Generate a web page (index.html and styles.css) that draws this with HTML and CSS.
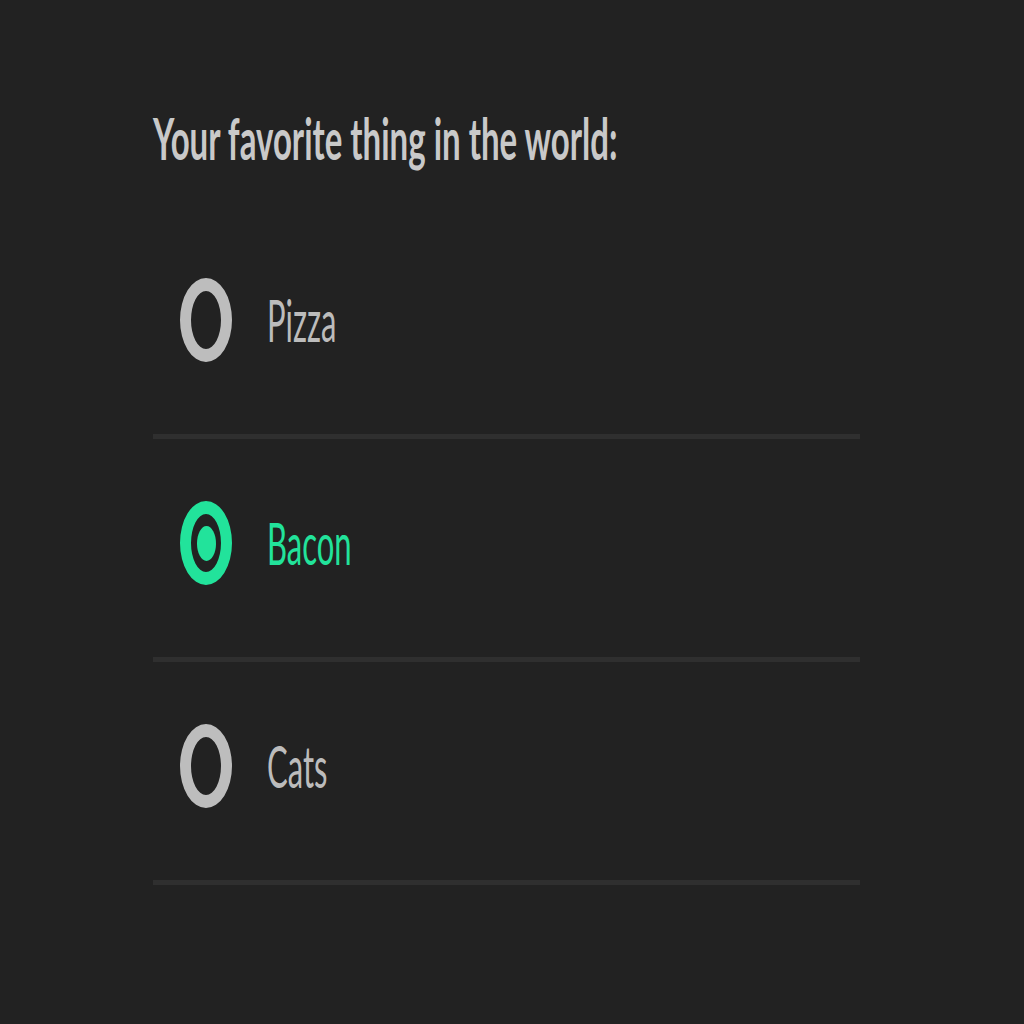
FILE: index.html
```html
<!DOCTYPE html>
<html>
<head>
<meta charset="utf-8">
<link rel="stylesheet" href="styles.css">
</head>
<body>
<div class="page">
  <h1 class="title"><span class="stretch title-text">Your favorite thing in the world:</span></h1>
  <ul class="options">
    <li class="option">
      <span class="radio"></span>
      <span class="label"><span class="stretch">Pizza</span></span>
    </li>
    <li class="option selected">
      <span class="radio"><span class="dot"></span></span>
      <span class="label"><span class="stretch">Bacon</span></span>
    </li>
    <li class="option">
      <span class="radio"></span>
      <span class="label"><span class="stretch">Cats</span></span>
    </li>
  </ul>
</div>
</body>
</html>
```
FILE: styles.css
```css
html, body {
  margin: 0;
  padding: 0;
  background: #222222;
  height: 100%;
}
body {
  font-family: Lato, "Open Sans", sans-serif;
}
.page {
  width: 707px;
  padding-left: 153px;
  padding-top: 110px;
}
.title {
  margin: 0;
  height: 106px;
  font-size: 33px;
  font-weight: 700;
  color: #c9c9c9;
  line-height: 56px;
  letter-spacing: 0;
}
.stretch {
  display: inline-block;
  transform: scaleY(1.85);
  transform-origin: center;
}
.title-text {
  transform: scaleY(1.72);
}
.options {
  list-style: none;
  margin: 0;
  padding: 0;
}
.option {
  display: flex;
  align-items: center;
  padding: 62px 0 72px 27px;
  border-bottom: 5px solid #2f2f2f;
}
.radio {
  box-sizing: border-box;
  width: 52px;
  height: 84px;
  border-radius: 50%;
  border: 11px solid #bdbdbd;
  border-top-width: 13px;
  border-bottom-width: 13px;
  display: flex;
  align-items: center;
  justify-content: center;
  flex-shrink: 0;
}
.label {
  margin-left: 35px;
  font-size: 31px;
  color: #bcbcbc;
  line-height: 40px;
}
.selected .radio {
  border-color: #22e39b;
}
.selected .label {
  color: #22e39b;
}
.dot {
  width: 19px;
  height: 35px;
  border-radius: 50%;
  background: #22e39b;
}
```
